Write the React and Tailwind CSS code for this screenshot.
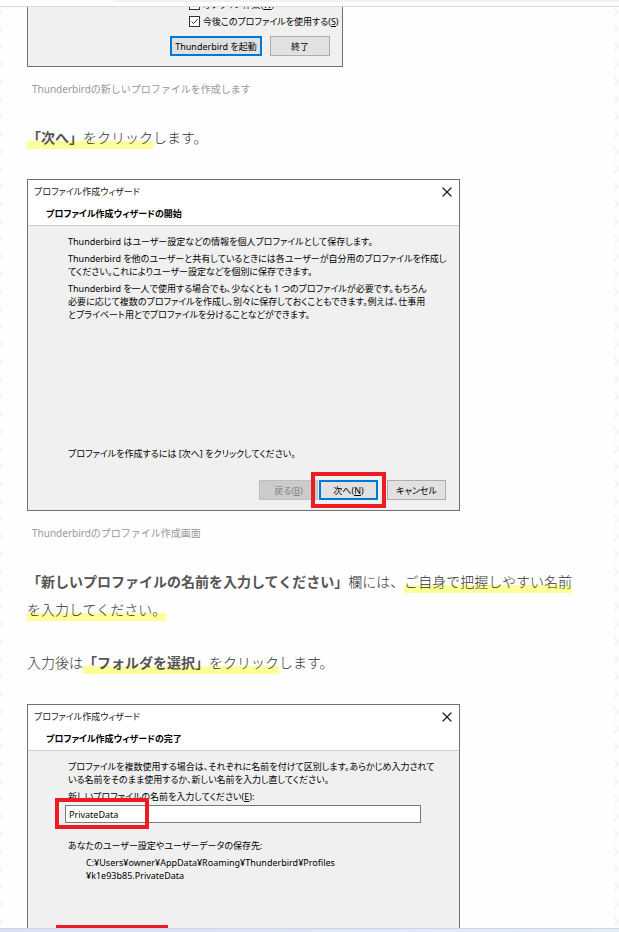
import { X } from "lucide-react"

const uiFont = "font-['Noto_Sans','Noto_Sans_CJK_JP',sans-serif] text-[9px] leading-[13px] text-black [font-feature-settings:'palt']"

const introParagraphs = [
    ["Thunderbird はユーザー設定などの情報を個人プロファイルとして保存します。"],
    [
        "Thunderbird を他のユーザーと共有しているときには各ユーザーが自分用のプロファイルを作成し",
        "てください。これによりユーザー設定などを個別に保存できます。"
    ],
    [
        "Thunderbird を一人で使用する場合でも、少なくとも 1 つのプロファイルが必要です。もちろん",
        "必要に応じて複数のプロファイルを作成し、別々に保存しておくこともできます。例えば、仕事用",
        "とプライベート用とでプロファイルを分けることなどができます。"
    ]
]

const finishParagraph = [
    "プロファイルを複数使用する場合は、それぞれに名前を付けて区別します。あらかじめ入力されて",
    "いる名前をそのまま使用するか、新しい名前を入力し直してください。"
]

const buttonStyle = {
    normal: "border border-[#adadad] bg-[#e1e1e1]",
    primary: "border-2 border-[#0078d7] bg-[#e1e1e1]",
    disabled: "border border-[#bfbfbf] bg-[#cccccc] text-[#838383]"
}

function DialogButton({ variant = "normal", width = "w-[59px]", children }) {
    return (
        <button
            type="button"
            disabled={variant === "disabled"}
            className={`h-5 flex items-center justify-center whitespace-nowrap ${width} ${buttonStyle[variant]}`}
        >
            {children}
        </button>
    )
}

function CheckRow({ id, checked, children }) {
    return (
        <div className="flex items-center gap-[3px]">
            <span className="relative flex">
                <input
                    id={id}
                    type="checkbox"
                    defaultChecked={checked}
                    className="peer appearance-none size-[11px] border border-[#333] bg-white"
                />
                <svg viewBox="0 0 11 11" className="hidden peer-checked:block absolute inset-0 size-[11px] pointer-events-none">
                    <path d="M2.5 5.5 L4.5 7.5 L8.5 3.2" fill="none" stroke="#222" strokeWidth="1" />
                </svg>
            </span>
            <label htmlFor={id} className="whitespace-nowrap">{children}</label>
        </div>
    )
}

function Lines({ lines }) {
    return (
        <p>
            {lines.map((line) => (
                <span key={line} className="block whitespace-nowrap">{line}</span>
            ))}
        </p>
    )
}

function Marker({ children }) {
    return (
        <span className="pb-[2px] bg-[linear-gradient(transparent_60%,#ffff99_60%)]">{children}</span>
    )
}

function Caption({ children }) {
    return (
        <figcaption className="mt-[14px] px-[5px] text-[10px] leading-4 text-[#999]">{children}</figcaption>
    )
}

function Wizard({ heading, children }) {
    return (
        <div className={`w-full max-w-[433px] min-h-[332px] flex flex-col border border-[#707070] bg-[#f0f0f0] ${uiFont}`}>
            <div className="bg-white border-b border-[#cfcfcf]">
                <div className="flex items-center justify-between h-[23px] pl-[6px] pr-1 text-[#222]">
                    <span>プロファイル作成ウィザード</span>
                    <button type="button" aria-label="閉じる">
                        <X className="size-4" strokeWidth={1.8} />
                    </button>
                </div>
                <h2 className="pl-[18px] h-[22px] leading-[22px] font-bold">{heading}</h2>
            </div>
            {children}
        </div>
    )
}

// faint chevron texture running down the page edge
function EdgePattern({ id, className, path }) {
    return (
        <svg className={`shrink-0 h-full ${className}`} aria-hidden="true">
            <defs>
                <pattern id={id} width="6" height="17.5" patternUnits="userSpaceOnUse">
                    <path d={path} fill="none" stroke="#efefef" strokeWidth="1.2" />
                </pattern>
            </defs>
            <rect width="100%" height="100%" fill={`url(#${id})`} />
        </svg>
    )
}

export default function App() {
    return (
        <div className="h-screen flex flex-col overflow-hidden bg-white">

            {/* browser toolbar edge */}
            <div className="shrink-0 h-[7px] border-b border-[#dcdcdc] bg-white">
                <div className="h-[2px] ml-[113px] bg-[#f1f1f1] rounded-bl" />
            </div>

            <div className="flex-1 min-h-0 flex overflow-hidden bg-[#fefefe]">
                <EdgePattern id="edge-left" className="w-[3px]" path="M-2 0 L2 4.5 L-2 9" />

                <main className="flex-1 min-w-0 pl-6 pr-4 text-[14px] leading-7 font-light text-[#333] font-['Noto_Sans','Noto_Sans_CJK_JP',sans-serif]">

                    <figure className="mb-[27px] font-normal">
                        <div className={`w-full max-w-[316px] h-[60px] flex flex-col items-end justify-end overflow-hidden border border-t-0 border-[#707070] bg-[#f0f0f0] pr-3 pb-[10px] ${uiFont}`}>
                            <div className="flex flex-col gap-1 w-[141px]">
                                <CheckRow id="offline">オフライン作業(<u>W</u>)</CheckRow>
                                <CheckRow id="keep" checked>今後このプロファイルを使用する(<u>S</u>)</CheckRow>
                            </div>
                            <div className="flex gap-2 mt-2">
                                <DialogButton variant="primary" width="w-[92px]">Thunderbird を起動</DialogButton>
                                <DialogButton width="w-[60px]">終了</DialogButton>
                            </div>
                        </div>
                        <Caption>Thunderbirdの新しいプロファイルを作成します</Caption>
                    </figure>

                    <p className="mb-[25px]">
                        <Marker><strong className="font-bold text-[#555]">「次へ」</strong>をクリック</Marker>します。
                    </p>

                    <figure className="pt-[2px] mb-[27px] font-normal">
                        <Wizard heading="プロファイル作成ウィザードの開始">
                            <div className="flex flex-col gap-1 pl-10 pt-[9px]">
                                {introParagraphs.map((lines) => (
                                    <Lines key={lines[0]} lines={lines} />
                                ))}
                            </div>
                            <p className="mt-auto pl-10">プロファイルを作成するには [次へ] をクリックしてください。</p>
                            <div className="flex justify-end gap-px mt-5 pr-[13px] pb-[10px]">
                                <DialogButton variant="disabled">戻る(<u>B</u>)</DialogButton>
                                <div className="relative">
                                    <DialogButton variant="primary">次へ(<u>N</u>)</DialogButton>
                                    <span className="absolute -inset-2 border-4 border-[#ed1c24] pointer-events-none" />
                                </div>
                                <div className="ml-2">
                                    <DialogButton>キャンセル</DialogButton>
                                </div>
                            </div>
                        </Wizard>
                        <Caption>Thunderbirdのプロファイル作成画面</Caption>
                    </figure>

                    <p className="mb-[25px]">
                        <strong className="font-bold text-[#555]">「新しいプロファイルの名前を入力してください」</strong>欄には、<Marker>ご自身で把握しやすい名前<br />を入力してください。</Marker>
                    </p>

                    <p className="mb-[25px]">
                        入力後は<Marker><strong className="font-bold text-[#555]">「フォルダを選択」</strong>をクリック</Marker>します。
                    </p>

                    <figure className="pt-[2px] font-normal">
                        <Wizard heading="プロファイル作成ウィザードの完了">
                            <div className="flex flex-col gap-1 pl-10 pt-[9px]">
                                <Lines lines={finishParagraph} />
                                <label htmlFor="profile-name">新しいプロファイルの名前を入力してください(<u>E</u>):</label>
                            </div>
                            <div className="relative mt-[2px] ml-[37px] mr-[38px]">
                                <input
                                    id="profile-name"
                                    type="text"
                                    defaultValue="PrivateData"
                                    className="block w-full h-[18px] px-[3px] border border-[#7a7a7a] bg-white"
                                />
                                <span className="absolute -left-[10px] -top-[7px] w-[94px] h-[31px] border-4 border-[#ed1c24] pointer-events-none" />
                            </div>
                            <div className="flex flex-col gap-1 pl-10 mt-4">
                                <p>あなたのユーザー設定やユーザーデータの保存先:</p>
                                <p className="pl-[18px]">
                                    C:¥Users¥owner¥AppData¥Roaming¥Thunderbird¥Profiles<br />¥k1e93b85.PrivateData
                                </p>
                            </div>
                            <div className="flex mt-[51px] pl-9">
                                <div className="relative">
                                    <DialogButton width="w-24">フォルダーを選択(<u>C</u>)...</DialogButton>
                                    <span className="absolute -inset-2 border-4 border-[#ed1c24] pointer-events-none" />
                                </div>
                            </div>
                        </Wizard>
                    </figure>
                </main>

                <EdgePattern id="edge-right" className="w-[5px]" path="M0 0 L4 4.5 L0 9" />
            </div>

            {/* taskbar edge */}
            <div className="shrink-0 h-1 border-t border-[#cdd5e8] bg-linear-to-r from-[#d9e0f3] to-[#e3edf6]" />
        </div>
    )
}
